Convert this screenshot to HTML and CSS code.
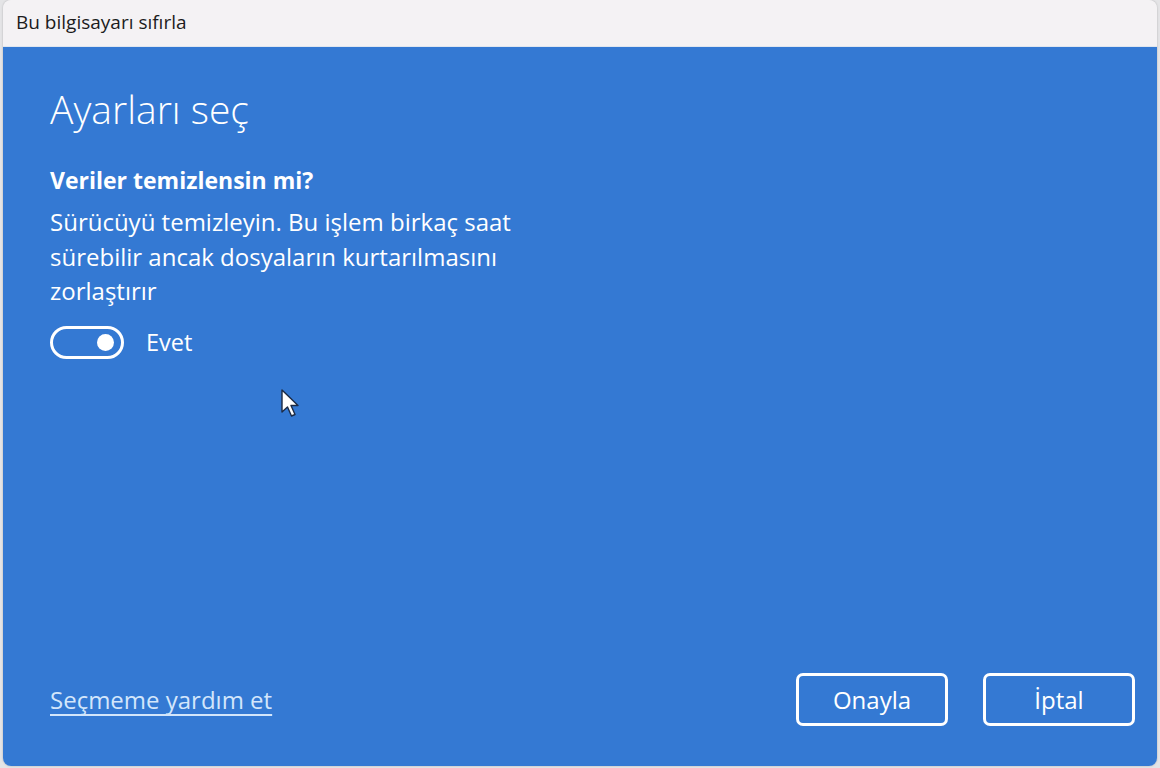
FILE: index.html
```html
<!DOCTYPE html>
<html lang="tr">
<head>
    <meta charset="UTF-8">
    <title>Bu bilgisayarı sıfırla</title>
    <link rel="stylesheet" href="styles.css">
</head>
<body>
    <div class="window">
        <div class="titlebar">Bu bilgisayarı sıfırla</div>
        <div class="content">
            <h1>Ayarları seç</h1>
            <h2>Veriler temizlensin mi?</h2>
            <p class="desc">Sürücüyü temizleyin. Bu işlem birkaç saat<br>sürebilir ancak dosyaların kurtarılmasını<br>zorlaştırır</p>
            <div class="toggle-row">
                <span class="toggle"><span class="knob"></span></span>
                <span class="toggle-label">Evet</span>
            </div>
            <div class="spacer"></div>
            <div class="footer">
                <a href="#" class="help-link">Seçmeme yardım et</a>
                <div class="buttons">
                    <button class="btn">Onayla</button>
                    <button class="btn">İptal</button>
                </div>
            </div>
            <!-- mouse pointer -->
            <svg class="cursor" width="22" height="32" viewBox="0 0 22 32">
                <path d="M2 2 L2 24 L7.5 19 L11.5 28 L15 26.5 L11 17.5 L18 17.5 Z" fill="#fff" stroke="#1b2a44" stroke-width="1.4" stroke-linejoin="round"/>
            </svg>
        </div>
    </div>
</body>
</html>
```

FILE: styles.css
```css
* {
    margin: 0;
    padding: 0;
    box-sizing: border-box;
}
body {
    font-family: 'Open Sans', 'Noto Sans', sans-serif;
    background: #e4e4e6;
    width: 1160px;
    height: 768px;
    overflow: hidden;
}
.window {
    margin-left: 3px;
    width: 1154px;
    height: 766px;
    display: flex;
    flex-direction: column;
    border-radius: 8px;
    overflow: hidden;
    box-shadow: 0 0 2px rgba(0, 0, 0, 0.25);
}
.titlebar {
    height: 47px;
    background: #f4f2f4;
    color: #1c1c1c;
    font-size: 19px;
    padding-left: 13px;
    display: flex;
    align-items: center;
    padding-bottom: 2px;
    border-bottom: 1px solid #dfe6ef;
}
.content {
    flex: 1;
    background: #3479d3;
    color: #fff;
    padding: 37px 22px 40px 47px;
    display: flex;
    flex-direction: column;
    position: relative;
}
h1 {
    font-size: 39px;
    font-weight: 300;
    line-height: 50px;
    margin-bottom: 31px;
}
h2 {
    font-size: 23px;
    font-weight: 700;
    line-height: 30px;
    margin-bottom: 10px;
}
.desc {
    font-size: 24px;
    line-height: 34.5px;
    margin-bottom: 17px;
}
.toggle-row {
    display: flex;
    align-items: center;
    gap: 22px;
    font-size: 23.5px;
}
.toggle {
    width: 74px;
    height: 33px;
    border: 3px solid #fff;
    border-radius: 17px;
    display: flex;
    align-items: center;
    justify-content: flex-end;
    padding-right: 7px;
}
.knob {
    width: 17px;
    height: 17px;
    border-radius: 50%;
    background: #fff;
}
.spacer {
    flex: 1;
}
.footer {
    display: flex;
    justify-content: space-between;
    align-items: center;
}
.help-link {
    color: #d3e6fb;
    font-size: 24px;
    text-decoration: underline;
    text-underline-offset: 5px;
    text-decoration-thickness: 1.5px;
    text-decoration-skip-ink: none;
}
.buttons {
    display: flex;
    gap: 35px;
}
.btn {
    width: 152px;
    height: 53px;
    background: transparent;
    border: 3px solid #fff;
    border-radius: 7px;
    color: #fff;
    font-family: inherit;
    font-size: 24px;
    cursor: pointer;
}
.cursor {
    position: absolute;
    left: 277px;
    top: 341px;
}
```
